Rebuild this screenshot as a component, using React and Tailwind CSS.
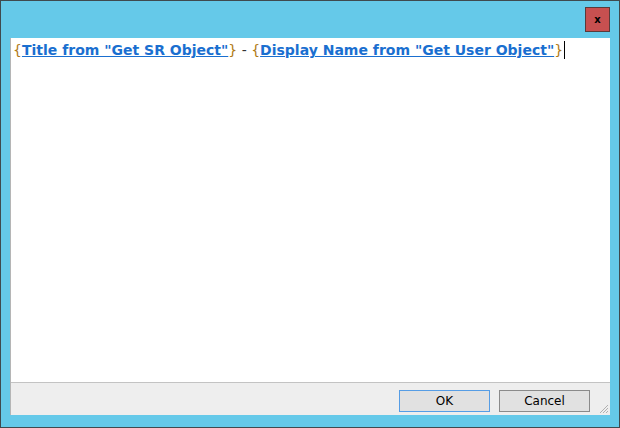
export default function App() {
  return (
    <div className="w-[620px] h-[428px] bg-[#3f4a4f] p-px">
      <div className="w-full h-full bg-[#65c9e9] flex flex-col px-[9px] pb-[12px]">
        <div className="h-[37px] flex justify-end items-start pt-[6px]">
          <div className="w-[25px] h-[25px] bg-[#c75050] border border-[#5a3a3a] flex items-center justify-center">
            <span className="text-[10px] font-bold leading-none text-black" style={{ fontFamily: '"DejaVu Sans", sans-serif' }}>x</span>
          </div>
        </div>
        <div className="flex-1 flex flex-col border-l border-[#b5b5b5] bg-white">
          <div className="flex-1 bg-white border-b border-[#c3c3c3] pl-[2px] pt-[3px]">
            <div className="text-[14px] leading-[18px] font-bold whitespace-nowrap flex items-center" style={{ fontFamily: '"DejaVu Sans", sans-serif' }}>
              <span className="text-[#b07a16] font-normal">{'{'}</span>
              <span className="text-[#1a6fd0] underline">Title from "Get SR Object"</span>
              <span className="text-[#b07a16] font-normal">{'}'}</span>
              <span className="text-[#333] font-normal">&nbsp;-&nbsp;</span>
              <span className="text-[#b07a16] font-normal">{'{'}</span>
              <span className="text-[#1a6fd0] underline">Display Name from "Get User Object"</span>
              <span className="text-[#b07a16] font-normal">{'}'}</span>
              <span className="inline-block w-px h-[18px] bg-black ml-px"></span>
            </div>
          </div>
          <div className="h-[32px] bg-[#eeeeee] flex items-start justify-end gap-[9px] pr-[20px] pt-[7px] relative">
            <button className="w-[91px] h-[22px] bg-[#e1e1e1] border border-[#569de5] text-[12px] text-black leading-none" style={{ fontFamily: '"DejaVu Sans", sans-serif' }}>OK</button>
            <button className="w-[91px] h-[22px] bg-[#e1e1e1] border border-[#8a8a8a] text-[12px] text-black leading-none" style={{ fontFamily: '"DejaVu Sans", sans-serif' }}>Cancel</button>
            <svg className="absolute right-[1px] bottom-[1px]" width="12" height="12" viewBox="0 0 12 12">
              <path d="M11 3 L3 11 M11 6 L6 11 M11 9 L9 11" stroke="#b0b0b0" strokeWidth="1" />
            </svg>
          </div>
        </div>
      </div>
    </div>
  );
}
